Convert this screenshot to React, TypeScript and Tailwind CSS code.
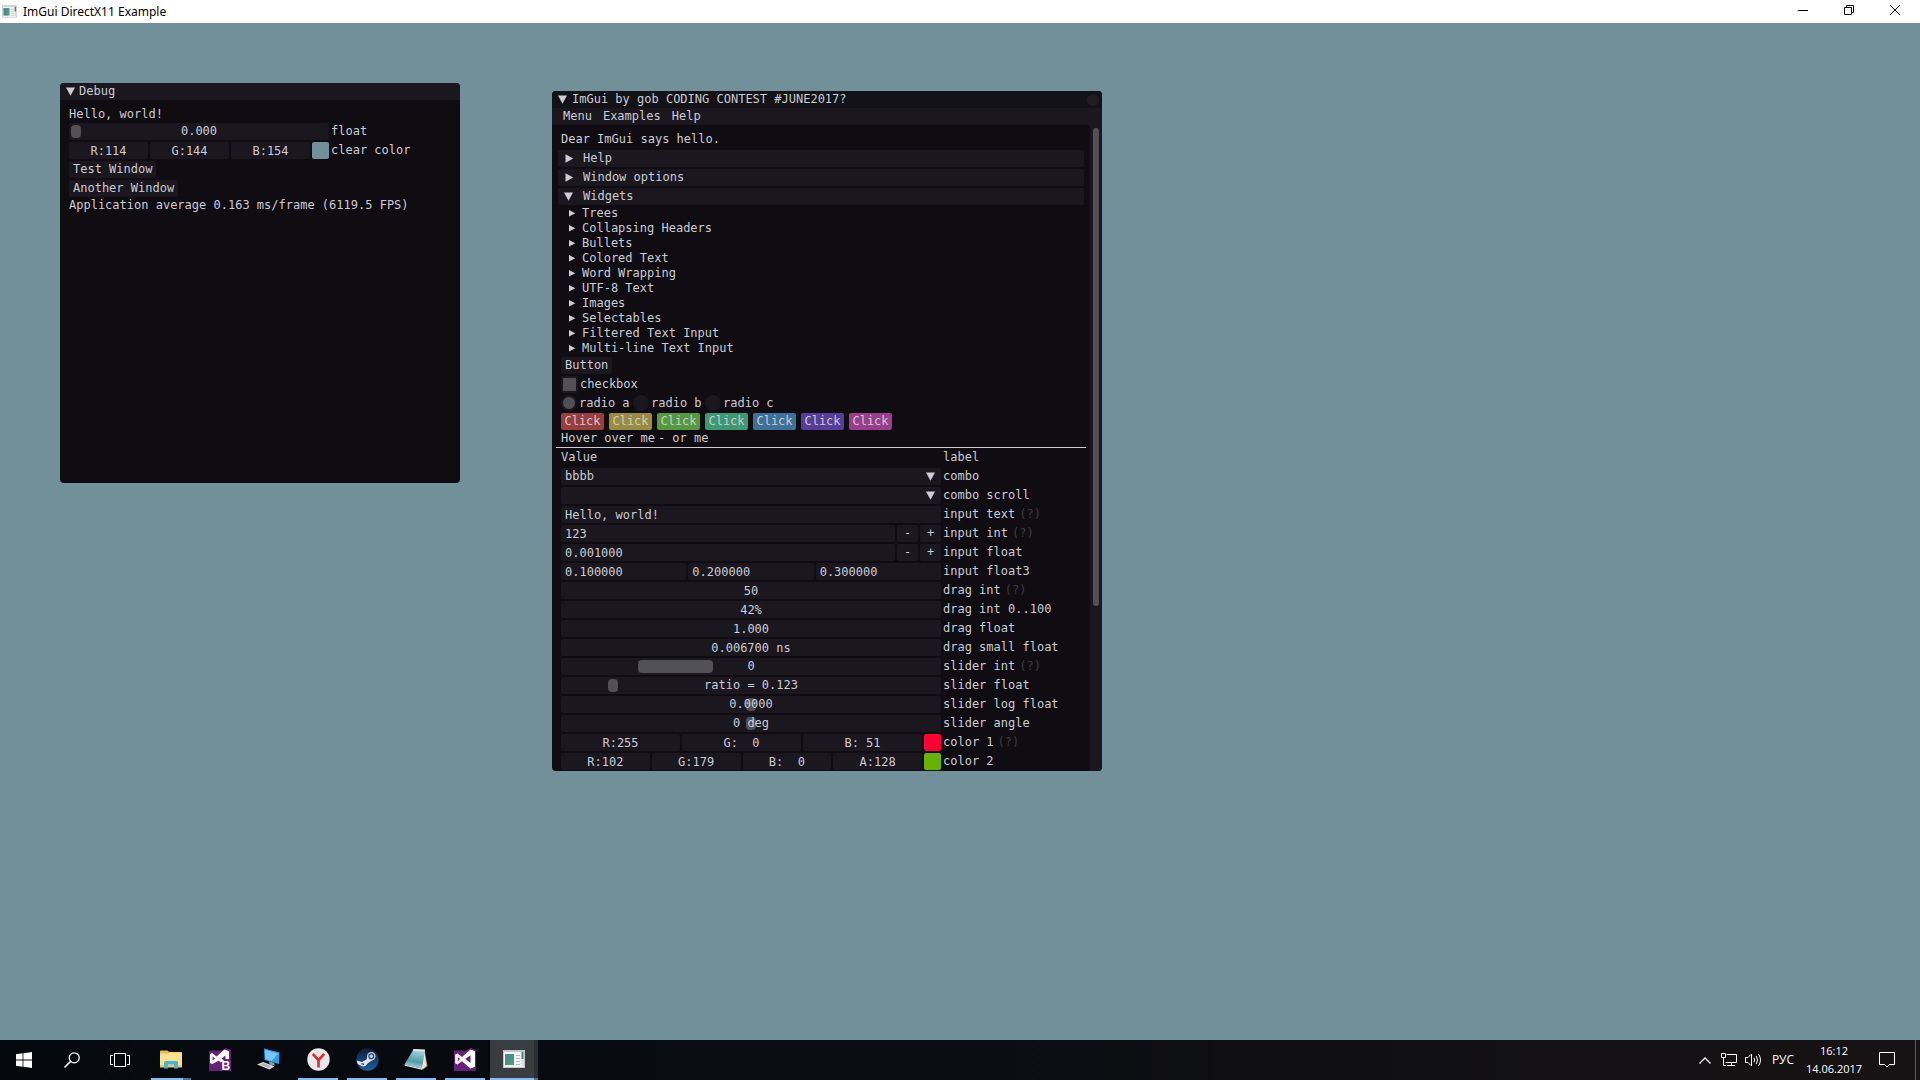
import React, { useState } from 'react';
import clsx from 'clsx';

const TREE_NODES = [
  'Trees',
  'Collapsing Headers',
  'Bullets',
  'Colored Text',
  'Word Wrapping',
  'UTF-8 Text',
  'Images',
  'Selectables',
  'Filtered Text Input',
  'Multi-line Text Input',
];

const CLICK_COLORS = [
  'bg-[#993d3d]',
  'bg-[#998c3d]',
  'bg-[#57993d]',
  'bg-[#3d9971]',
  'bg-[#3d7199]',
  'bg-[#573d99]',
  'bg-[#993d8c]',
];

const FRAME = 'h-[17px] min-w-0 rounded-[2px] bg-[#1a171f] outline-none';

type ArrowDir = 'down' | 'right' | 'small';

const Arrow: React.FC<{ dir: ArrowDir }> = ({ dir }) => {
  if (dir === 'small') {
    return (
      <svg width="7" height="7" viewBox="0 0 7 7" className="shrink-0 fill-current" aria-hidden="true">
        <path d="M0 0 L6.3 3.2 L0 6.4 Z" />
      </svg>
    );
  }
  return (
    <svg width="10" height="10" viewBox="0 0 10 10" className="shrink-0 fill-current" aria-hidden="true">
      <path d={dir === 'down' ? 'M0 0.6 H9 L4.5 8.8 Z' : 'M1.5 0.2 L9.2 4.5 L1.5 8.8 Z'} />
    </svg>
  );
};

// ---------------------------------------------------------------- widgets

const Row: React.FC<{ id: string; label: string; help?: boolean; narrow?: boolean; children: React.ReactNode }> = ({
  id,
  label,
  help,
  narrow,
  children,
}) => (
  <div className="flex h-[17px] items-center gap-[2px]">
    <div className={clsx('flex shrink-0 gap-[2px]', narrow ? 'w-[260px]' : 'w-[380px]')}>{children}</div>
    <label htmlFor={id}>{label}</label>
    {help && <span className="ml-[2px] text-[#3d3b42]">(?)</span>}
  </div>
);

const Field: React.FC<{ id?: string; name: string; value: string; centered?: boolean }> = ({
  id,
  name,
  value,
  centered,
}) => (
  <input
    id={id}
    type="text"
    aria-label={id ? undefined : name}
    defaultValue={value}
    className={clsx(FRAME, 'w-0 flex-1 px-1', centered && 'text-center')}
  />
);

const Slider: React.FC<{ id: string; value: number; text: string; wide?: boolean }> = ({ id, value, text, wide }) => (
  <div className={clsx(FRAME, 'grid w-full items-center px-[2px]')}>
    <input
      id={id}
      type="range"
      min={0}
      max={1}
      step={0.001}
      defaultValue={value}
      className={clsx(
        'col-start-1 row-start-1 h-[13px] w-full appearance-none bg-transparent outline-none',
        '[&::-webkit-slider-thumb]:h-[13px] [&::-webkit-slider-thumb]:appearance-none [&::-webkit-slider-thumb]:rounded-[4px] [&::-webkit-slider-thumb]:bg-[#515057]',
        wide ? '[&::-webkit-slider-thumb]:w-[75px]' : '[&::-webkit-slider-thumb]:w-[10px]'
      )}
    />
    <output htmlFor={id} className="pointer-events-none z-10 col-start-1 row-start-1 text-center">
      {text}
    </output>
  </div>
);

const Combo: React.FC<{ id: string; value: string }> = ({ id, value }) => (
  <div className={clsx(FRAME, 'grid w-full items-center')}>
    <select id={id} className="col-start-1 row-start-1 h-[17px] w-full appearance-none bg-transparent px-1 outline-none">
      <option>{value}</option>
    </select>
    <span className="pointer-events-none col-start-1 row-start-1 mr-[5px] justify-self-end">
      <Arrow dir="down" />
    </span>
  </div>
);

const Swatch: React.FC<{ name: string; color: string }> = ({ name, color }) => (
  <button type="button" aria-label={name} className={clsx('size-[17px] shrink-0 rounded-[2px]', color)} />
);

const Button: React.FC<{ children: React.ReactNode; color?: string }> = ({ children, color }) => (
  <button
    type="button"
    className={clsx('h-[17px] self-start rounded-[2px]', color ? [color, 'w-[43px]'] : 'bg-[#1a171f] px-1')}
  >
    {children}
  </button>
);

const Stepper: React.FC<{ name: string }> = ({ name }) => (
  <>
    <button type="button" aria-label={`decrease ${name}`} className={clsx(FRAME, 'w-[21px]')}>
      -
    </button>
    <button type="button" aria-label={`increase ${name}`} className={clsx(FRAME, 'w-[21px]')}>
      +
    </button>
  </>
);

const Header: React.FC<{ label: string; open?: boolean }> = ({ label, open }) => (
  <button
    type="button"
    aria-expanded={!!open}
    className={clsx(FRAME, '-mx-[3px] flex items-center gap-[9px] px-[6px] text-left')}
  >
    <Arrow dir={open ? 'down' : 'right'} />
    {label}
  </button>
);

// ---------------------------------------------------------------- windows

const DebugWindow: React.FC = () => (
  <section
    aria-label="Debug"
    className="absolute left-[60px] top-[60px] flex h-[400px] w-[400px] flex-col overflow-hidden rounded-[4px] bg-[#0f0d12]"
  >
    <header className="flex h-[17px] items-center gap-[3px] bg-[#1a171f] px-[6px]">
      <Arrow dir="down" />
      <h2>Debug</h2>
    </header>
    <div className="flex flex-col gap-[2px] px-[9px] pt-2">
      <p>Hello, world!</p>
      <Row id="dbg-float" label="float" narrow>
        <Slider id="dbg-float" value={0} text="0.000" />
      </Row>
      <Row id="dbg-clear" label="clear color" narrow>
        <Field id="dbg-clear" name="red" value="R:114" centered />
        <Field name="green" value="G:144" centered />
        <Field name="blue" value="B:154" centered />
        <Swatch name="clear color preview" color="bg-[#72909a]" />
      </Row>
      <Button>Test Window</Button>
      <Button>Another Window</Button>
      <p>Application average 0.163 ms/frame (6119.5 FPS)</p>
    </div>
  </section>
);

const Radios: React.FC = () => {
  const [picked, setPicked] = useState('a');
  return (
    <div className="flex h-4 items-center gap-[5px]">
      {['a', 'b', 'c'].map((r) => (
        <label key={r} className="flex w-[67px] items-center gap-[2px]">
          <input
            type="radio"
            name="radio"
            checked={picked === r}
            onChange={() => setPicked(r)}
            className="size-4 shrink-0 appearance-none rounded-full border-2 border-[#1a171f] bg-[#1a171f] checked:bg-[#515057]"
          />
          radio {r}
        </label>
      ))}
    </div>
  );
};

const DemoWindow: React.FC = () => (
  <section
    aria-label="ImGui demo"
    className="absolute left-[552px] top-[68px] flex h-[680px] w-[550px] flex-col overflow-hidden rounded-[4px] bg-[#0f0d12]"
  >
    <header className="flex h-[17px] shrink-0 items-center gap-1 bg-[#121217] pl-[6px] pr-[3px]">
      <Arrow dir="down" />
      <h2>ImGui by gob CODING CONTEST #JUNE2017?</h2>
      <button type="button" aria-label="Close" className="ml-auto size-3 rounded-full bg-[#1f1d20]" />
    </header>
    <nav className="flex h-[17px] shrink-0 items-center gap-[11px] bg-[#1a171f] px-[11px]">
      <button type="button">Menu</button>
      <button type="button">Examples</button>
      <button type="button">Help</button>
    </nav>
    <div className="flex min-h-0 flex-1">
      <div className="flex min-w-0 flex-1 flex-col gap-[2px] overflow-hidden px-[9px] pt-2">
        <p className="mb-[2px]">Dear ImGui says hello.</p>
        <Header label="Help" />
        <Header label="Window options" />
        <Header label="Widgets" open />
        {TREE_NODES.map((node) => (
          <button key={node} type="button" className="flex h-[13px] shrink-0 items-center gap-[6px] px-2">
            <Arrow dir="small" />
            {node}
          </button>
        ))}
        <Button>Button</Button>
        <label className="flex items-center gap-[2px] self-start">
          <input
            type="checkbox"
            defaultChecked
            className="size-[17px] appearance-none rounded-[2px] border-2 border-[#1a171f] bg-[#1a171f] checked:bg-[#515057]"
          />
          checkbox
        </label>
        <Radios />
        <div className="flex gap-[5px]">
          {CLICK_COLORS.map((color) => (
            <Button key={color} color={color}>
              Click
            </Button>
          ))}
        </div>
        <p className="flex gap-[3px]">
          <span>Hover over me</span>
          <span>- or me</span>
        </p>
        <hr className="-mx-[5px] -mb-px border-0 border-t border-[#ccccd4]" />
        <div className="flex h-[17px] items-center gap-[2px]">
          <span className="w-[380px] shrink-0">Value</span>
          <span>label</span>
        </div>
        <Row id="combo" label="combo">
          <Combo id="combo" value="bbbb" />
        </Row>
        <Row id="combo-scroll" label="combo scroll">
          <Combo id="combo-scroll" value="" />
        </Row>
        <Row id="input-text" label="input text" help>
          <Field id="input-text" name="input text" value="Hello, world!" />
        </Row>
        <Row id="input-int" label="input int" help>
          <Field id="input-int" name="input int" value="123" />
          <Stepper name="input int" />
        </Row>
        <Row id="input-float" label="input float">
          <Field id="input-float" name="input float" value="0.001000" />
          <Stepper name="input float" />
        </Row>
        <Row id="input-float3" label="input float3">
          <Field id="input-float3" name="x" value="0.100000" />
          <Field name="y" value="0.200000" />
          <Field name="z" value="0.300000" />
        </Row>
        <Row id="drag-int" label="drag int" help>
          <Field id="drag-int" name="drag int" value="50" centered />
        </Row>
        <Row id="drag-pct" label="drag int 0..100">
          <Field id="drag-pct" name="drag int 0..100" value="42%" centered />
        </Row>
        <Row id="drag-float" label="drag float">
          <Field id="drag-float" name="drag float" value="1.000" centered />
        </Row>
        <Row id="drag-small" label="drag small float">
          <Field id="drag-small" name="drag small float" value="0.006700 ns" centered />
        </Row>
        <Row id="slider-int" label="slider int" help>
          <Slider id="slider-int" value={0.25} text="0" wide />
        </Row>
        <Row id="slider-float" label="slider float">
          <Slider id="slider-float" value={0.123} text="ratio = 0.123" />
        </Row>
        <Row id="slider-log" label="slider log float">
          <Slider id="slider-log" value={0.5} text="0.0000" />
        </Row>
        <Row id="slider-angle" label="slider angle">
          <Slider id="slider-angle" value={0.5} text="0 deg" />
        </Row>
        <Row id="color1" label="color 1" help>
          <Field id="color1" name="red" value="R:255" centered />
          <Field name="green" value="G:  0" centered />
          <Field name="blue" value="B: 51" centered />
          <Swatch name="color 1 preview" color="bg-[#ff0033]" />
        </Row>
        <Row id="color2" label="color 2">
          <Field id="color2" name="red" value="R:102" centered />
          <Field name="green" value="G:179" centered />
          <Field name="blue" value="B:  0" centered />
          <Field name="alpha" value="A:128" centered />
          <Swatch name="color 2 preview" color="bg-[#66b300]" />
        </Row>
      </div>
      {/* scrollbar track + grab */}
      <div className="w-3 shrink-0 bg-[#1a171f] px-[3px] pt-[3px]">
        <div className="h-[478px] rounded-[3px] bg-[#515057]" />
      </div>
    </div>
  </section>
);

// ---------------------------------------------------------------- icons

const AppIcon: React.FC<{ width: number; height: number }> = ({ width, height }) => (
  <svg width={width} height={height} viewBox="0 0 22 18" aria-hidden="true">
    <defs>
      <linearGradient id="appShot" x1="0" y1="0" x2="1" y2="1">
        <stop offset="0" stopColor="#4a7fa0" />
        <stop offset="1" stopColor="#4ca56c" />
      </linearGradient>
    </defs>
    <rect width="22" height="18" fill="#c4c5cb" />
    <rect x="1" y="2" width="20" height="15" fill="#f4f5f7" />
    <rect x="2" y="4" width="9" height="11" fill="url(#appShot)" />
    <path d="M13 5.5h4M13 8.5h4M13 11.5h4M13 14.5h4" stroke="#b4b6b8" />
    <rect x="18.5" y="2" width="2" height="7" fill="#3f7f78" />
    <rect x="18.5" y="10" width="2" height="6" fill="#d5d7d8" />
  </svg>
);

const StartIcon = () => (
  <svg width="16" height="16" viewBox="0 0 16 16" fill="#fff" aria-hidden="true">
    <path d="M0 2.2 6.6 1.3V7.6H0ZM7.4 1.2 16 0V7.6H7.4ZM0 8.4H6.6V14.7L0 13.8ZM7.4 8.4H16V16L7.4 14.8Z" />
  </svg>
);

const SearchIcon = () => (
  <svg width="16" height="16" viewBox="0 0 16 16" fill="none" stroke="#fff" aria-hidden="true">
    <circle cx="10.2" cy="5.8" r="5" strokeWidth="1.3" />
    <path d="M6.6 9.4 0.5 15.5" strokeWidth="1.5" />
  </svg>
);

const TaskViewIcon = () => (
  <svg width="20" height="14" viewBox="0 0 20 14" fill="none" stroke="#fff" aria-hidden="true">
    <rect x="4.5" y="0.5" width="11" height="13" />
    <path d="M3 2.5H0.5V11.5H3M17 2.5H19.5V11.5H17" />
  </svg>
);

const ExplorerIcon = () => (
  <svg width="22" height="19" viewBox="0 0 22 19" aria-hidden="true">
    <path d="M0 1.5Q0 0.5 1 0.5H7.5L9 2H21Q22 2 22 3V17H0Z" fill="#e9bc52" />
    <path d="M0 3.5H8L9.5 2.5H22V17H0Z" fill="#fbe08d" />
    <path d="M0 15H22V17.5H0Z" fill="#f0c65f" />
    <path d="M4 18.5V12.5Q4 11 5.5 11H16.5Q18 11 18 12.5V18.5H14V14.5H8V18.5Z" fill="#45b5e0" />
  </svg>
);

const VsMark: React.FC<{ blend?: boolean }> = ({ blend }) => (
  <svg width="22" height="23" viewBox="0 0 22 23" aria-hidden="true">
    <path d="M0 2.5H12L17 0L22 2V23H0Z" fill="#68217a" />
    {blend ? (
      <>
        <path
          fillRule="evenodd"
          fill="#fff"
          d="M1 6 3 5 7.5 8.6 15.5 1.5 20 3.3V11H16.5V7.5L12.5 10.5 15 12.5 12 14.5 9.6 12.8 3.2 16 1 15ZM3.6 8.4V12.6L6 10.5Z"
        />
        <text x="12.6" y="21.5" fill="#fff" fontSize="12" fontWeight="700" fontFamily="Liberation Sans, sans-serif">
          B
        </text>
      </>
    ) : (
      <path
        fillRule="evenodd"
        fill="#fff"
        d="M1.2 6.5 3.6 5.5 8 9 16.5 1.5 21 3.3V18.7L16.5 20.5 8 13.2 3.6 16.5 1.2 15.5ZM3.8 9V13.2L6 11.1ZM16.5 7.2 11.2 11.1 16.5 15Z"
      />
    )}
  </svg>
);

const ComputerIcon = () => (
  <svg width="24" height="22" viewBox="0 0 24 22" aria-hidden="true">
    <path d="M7 0.5 22.5 4.5 22 16 7.5 12Z" fill="#2f9be6" />
    <path d="M8 1.8 21.3 5.4 14.5 13 8.4 11.3Z" fill="#74c6fb" />
    <path d="M12 13.2 17 14.7 18 17.5 12.5 16.5Z" fill="#8d9aa3" />
    <path d="M0 16.5 6 14 17.5 18.3 12.5 21.5Z" fill="#d6dde0" />
    <path d="M3 16.5 6.5 15.2 14.4 18.2 11.4 19.8Z" fill="#a7b1b7" />
  </svg>
);

const YandexIcon = () => (
  <svg width="23" height="23" viewBox="0 0 23 23" aria-hidden="true">
    <circle cx="11.5" cy="11.5" r="11.2" fill="#e9e9ea" />
    <path d="M5.8 5.8 11.5 12.2 17.2 5.8M11.5 11.5V19.5" fill="none" stroke="#dc2a30" strokeWidth="2.6" />
  </svg>
);

const SteamIcon = () => (
  <svg width="23" height="23" viewBox="0 0 23 23" aria-hidden="true">
    <defs>
      <linearGradient id="steamBg" x1="0" y1="0" x2="0" y2="1">
        <stop offset="0" stopColor="#101c38" />
        <stop offset="1" stopColor="#1a5fa0" />
      </linearGradient>
    </defs>
    <circle cx="11.5" cy="11.5" r="11.2" fill="url(#steamBg)" />
    <path d="M0.6 12.5 6 14 10.5 11.5 12 7 16 10 16.5 12 11.5 15.5 9.5 18 6.5 18.5 1.8 16Z" fill="#dfe5ea" />
    <circle cx="15.3" cy="8.3" r="4.2" fill="#cdd5dc" />
    <circle cx="15.3" cy="8.3" r="2.4" fill="none" stroke="#27415f" strokeWidth="1.2" />
    <path d="M5.5 15.6 8 16.4" stroke="#27415f" strokeWidth="1.4" />
  </svg>
);

const NotepadIcon = () => (
  <svg width="24" height="23" viewBox="0 0 24 23" aria-hidden="true">
    <defs>
      <linearGradient id="padFace" x1="0.4" y1="0" x2="0.2" y2="1">
        <stop offset="0" stopColor="#9fd3dc" />
        <stop offset="0.6" stopColor="#4f9bab" />
        <stop offset="1" stopColor="#c6e6ea" />
      </linearGradient>
    </defs>
    <path d="M20.5 2 23.5 18 19 21.5 17.5 18Z" fill="#c9a274" />
    <path d="M20.5 2 22 18 18 21.5 16 18Z" fill="#ece6dc" />
    <path d="M9.5 1.5 21 2 18 20.5 0.5 16.5Z" fill="url(#padFace)" />
    <path d="M9.5 1 21 1.6 20.7 3.4 8.8 3Z" fill="#dfe3e4" />
    <path d="M0.5 16.5 18 20.5 18 21.8 1 17.8Z" fill="#e8f1f2" />
  </svg>
);

// ---------------------------------------------------------------- taskbar

type RunState = 'none' | 'running' | 'stacked' | 'active';

const TASKS: { name: string; icon: React.ReactNode; state: RunState }[] = [
  { name: 'File Explorer', icon: <ExplorerIcon />, state: 'stacked' },
  { name: 'Blend', icon: <VsMark blend />, state: 'none' },
  { name: 'Computer', icon: <ComputerIcon />, state: 'none' },
  { name: 'Yandex Browser', icon: <YandexIcon />, state: 'running' },
  { name: 'Steam', icon: <SteamIcon />, state: 'running' },
  { name: 'Notepad', icon: <NotepadIcon />, state: 'running' },
  { name: 'Visual Studio', icon: <VsMark />, state: 'running' },
  { name: 'ImGui DirectX11 Example', icon: <AppIcon width={22} height={18} />, state: 'active' },
];

const TaskButton: React.FC<{ name: string; icon: React.ReactNode; state: RunState }> = ({ name, icon, state }) => (
  <button
    type="button"
    aria-label={name}
    className={clsx('flex h-10 w-12 flex-col items-center', state === 'active' && 'bg-[#3a3d40]')}
  >
    <span
      className={clsx(
        'flex flex-1 items-center',
        state === 'active' && 'w-full justify-center border-r-4 border-[#2b2e31] pl-1'
      )}
    >
      {icon}
    </span>
    {state === 'running' && <span className="h-[2px] w-10 bg-[#83bdf5]" />}
    {state === 'stacked' && <span className="h-[2px] w-10 border-r-8 border-[#4a7595] bg-[#83bdf5]" />}
    {state === 'active' && <span className="h-[2px] w-full border-r-4 border-[#4a7595] bg-[#83bdf5]" />}
    {state === 'none' && <span className="h-[2px]" />}
  </button>
);

const Taskbar: React.FC = () => (
  <footer className="flex h-10 shrink-0 items-center bg-linear-to-r from-[#05080c] via-[#0b0d12] to-[#171314] font-['Open_Sans','Noto_Sans',sans-serif] text-xs text-white">
    <button type="button" aria-label="Start" className="flex h-10 w-12 items-center justify-center">
      <StartIcon />
    </button>
    <button type="button" aria-label="Search" className="flex h-10 w-12 items-center justify-center">
      <SearchIcon />
    </button>
    <button type="button" aria-label="Task View" className="flex h-10 w-12 items-center justify-center">
      <TaskViewIcon />
    </button>
    <div className="ml-[3px] flex gap-px">
      {TASKS.map((t) => (
        <TaskButton key={t.name} {...t} />
      ))}
    </div>
    <div className="ml-auto flex h-10 items-center">
      <button type="button" aria-label="Show hidden icons" className="flex w-6 justify-center">
        <svg width="12" height="7" viewBox="0 0 12 7" fill="none" stroke="#fff" strokeWidth="1.3" aria-hidden="true">
          <path d="M0.5 6.5 6 1 11.5 6.5" />
        </svg>
      </button>
      <button type="button" aria-label="Network" className="flex w-6 justify-center">
        <svg width="16" height="14" viewBox="0 0 16 14" fill="none" stroke="#fff" aria-hidden="true">
          <path d="M5.5 1.5H15.5V9.5H4.5M10.5 9.5V12.5M6 12.5H14" />
          <path d="M0.5 0.5H4.5V4.5H0.5ZM2.5 4.5V12.5H5" />
        </svg>
      </button>
      <button type="button" aria-label="Volume" className="flex w-6 justify-center">
        <svg width="17" height="14" viewBox="0 0 17 14" fill="none" stroke="#fff" aria-hidden="true">
          <path d="M0.5 4.5H3L6.5 1V13L3 9.5H0.5Z" />
          <path d="M9 4.8Q10.4 7 9 9.2M11.3 3Q13.8 7 11.3 11M13.6 1.2Q17.4 7 13.6 12.8" />
        </svg>
      </button>
      <button type="button" className="w-9 text-center">
        РУС
      </button>
      <button type="button" className="w-[66px] text-center text-[11px] leading-[18px]">
        <span className="block">16:12</span>
        <span className="block">14.06.2017</span>
      </button>
      <button type="button" aria-label="Action Center" className="flex w-10 justify-center">
        <svg width="16" height="16" viewBox="0 0 16 16" fill="none" stroke="#fff" aria-hidden="true">
          <path d="M0.5 0.5H15.5V12.5H10.5L8 15 5.5 12.5H0.5Z" />
        </svg>
      </button>
      <button type="button" aria-label="Show desktop" className="ml-2 h-10 w-[5px] border-l border-[#5a5a5c]" />
    </div>
  </footer>
);

const TitleBar: React.FC = () => (
  <header className="flex h-[23px] shrink-0 items-center bg-white pl-[2px] pr-[2px] font-['Noto_Sans',sans-serif] text-xs text-black">
    <AppIcon width={15} height={13} />
    <h1 className="ml-[6px]">ImGui DirectX11 Example</h1>
    <div className="ml-auto flex self-start">
      <button type="button" aria-label="Minimize" className="flex h-5 w-[46px] items-center justify-center">
        <svg width="10" height="10" viewBox="0 0 10 10" fill="none" stroke="#000" aria-hidden="true">
          <path d="M0 5.5H10" />
        </svg>
      </button>
      <button type="button" aria-label="Restore" className="flex h-5 w-[46px] items-center justify-center">
        <svg width="10" height="10" viewBox="0 0 10 10" fill="none" stroke="#000" aria-hidden="true">
          <path d="M0.5 2.5H7.5V9.5H0.5ZM2.5 2.5V0.5H9.5V7.5H7.5" />
        </svg>
      </button>
      <button type="button" aria-label="Close" className="flex h-5 w-[46px] items-center justify-center">
        <svg width="10" height="10" viewBox="0 0 10 10" fill="none" stroke="#000" aria-hidden="true">
          <path d="M0 0 10 10M10 0 0 10" />
        </svg>
      </button>
    </div>
  </header>
);

export default function App() {
  return (
    <div className="flex h-screen flex-col overflow-hidden bg-[#72909a]">
      <TitleBar />
      <main className="relative min-h-0 flex-1 whitespace-pre font-['DejaVu_Sans_Mono',monospace] text-[12px] leading-[13px] text-[#ccccd4]">
        <DebugWindow />
        <DemoWindow />
      </main>
      <Taskbar />
    </div>
  );
}
